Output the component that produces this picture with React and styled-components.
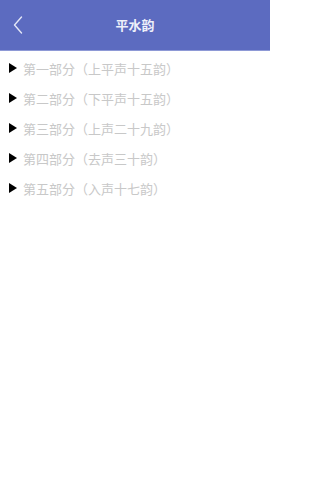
import React from "react";
import styled, { createGlobalStyle } from "styled-components";

const Global = createGlobalStyle`
  html, body { margin: 0; padding: 0; background: #fff; }
  body { font-family: "Noto Sans CJK SC", "Noto Sans", sans-serif; }
`;

const Page = styled.div`
  width: 270px;
  min-height: 482px;
  background: #fff;
  display: flex;
  flex-direction: column;
`;

const Header = styled.header`
  height: 50px;
  background: #5c6bc0;
  border-bottom: 1px solid #8e99d6;
  display: grid;
  grid-template-columns: 40px 1fr 40px;
  align-items: center;
  flex-shrink: 0;
`;

const Back = styled.button`
  background: none;
  border: 0;
  padding: 0 0 0 13px;
  height: 100%;
  display: flex;
  align-items: center;
  cursor: pointer;
`;

const Title = styled.h1`
  margin: 0;
  text-align: center;
  color: #eef0fa;
  font-size: 13px;
  font-weight: 700;
  line-height: 1;
  padding-bottom: 1px;
`;

const List = styled.ul`
  list-style: none;
  margin: 0;
  padding: 2px 0 0;
`;

const Row = styled.li`
  height: 30px;
  display: flex;
  align-items: center;
  padding-left: 9px;
  gap: 6px;
`;

const Arrow = styled.span`
  width: 0;
  height: 0;
  border-top: 5px solid transparent;
  border-bottom: 5px solid transparent;
  border-left: 8px solid #000;
  flex-shrink: 0;
`;

const Label = styled.span`
  color: #c8c8c8;
  font-size: 13px;
  line-height: 1;
`;

const items = [
  "第一部分（上平声十五韵）",
  "第二部分（下平声十五韵）",
  "第三部分（上声二十九韵）",
  "第四部分（去声三十韵）",
  "第五部分（入声十七韵）",
];

export default function App() {
  return (
    <Page>
      <Global />
      <Header>
        <Back aria-label="back">
          <svg width="10" height="18" viewBox="0 0 10 18">
            <path d="M8.5 1 L1.5 9 L8.5 17" fill="none" stroke="#e3e6f6" strokeWidth="1.4" strokeLinecap="round" strokeLinejoin="round" />
          </svg>
        </Back>
        <Title>平水韵</Title>
        <span />
      </Header>
      <List>
        {items.map((t) => (
          <Row key={t}>
            <Arrow />
            <Label>{t}</Label>
          </Row>
        ))}
      </List>
    </Page>
  );
}
